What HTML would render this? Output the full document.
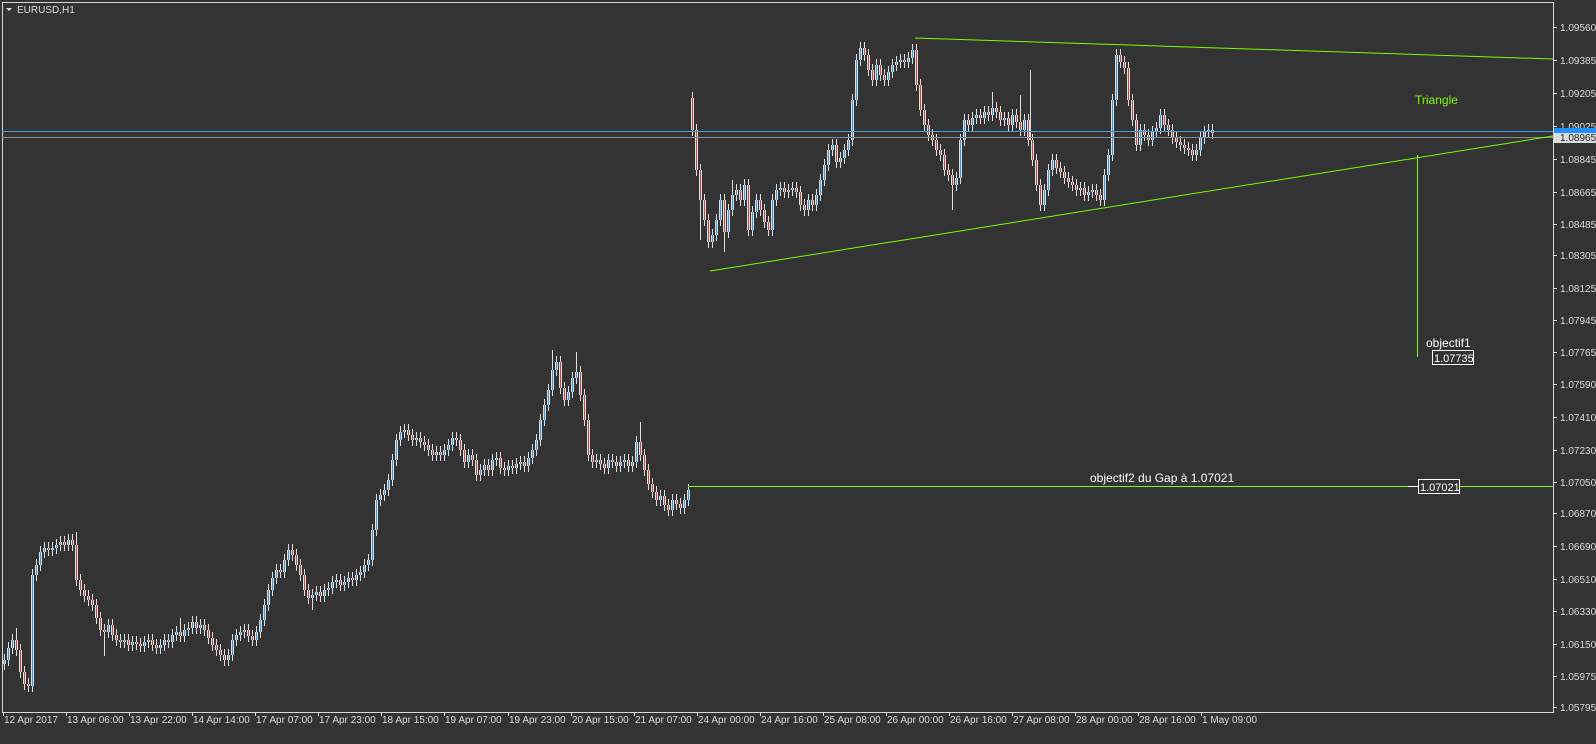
<!DOCTYPE html>
<html><head><meta charset="utf-8"><style>
html,body{margin:0;padding:0;background:#333333;}
body{width:1596px;height:744px;overflow:hidden;position:relative;font-family:"Liberation Sans",sans-serif;}
svg{position:absolute;left:0;top:0}
text{font-family:"Liberation Sans",sans-serif;}
</style></head><body>
<svg width="1596" height="744" xmlns="http://www.w3.org/2000/svg">
<defs>
<marker id="w" markerUnits="userSpaceOnUse" markerWidth="3" markerHeight="14" refX="1.5" refY="7" overflow="visible"><line x1="1.5" y1="1" x2="1.5" y2="13" stroke="#e0e0e0" stroke-width="1"/></marker>
<path id="pb" d="M4.5 660V664M8.5 648V660M12.5 640V648M32.5 575V686M36.5 565V575M40.5 552V565M44.5 548V552M52.5 548V550M56.5 545V548M60.5 542V545M68.5 540V545M108.5 625V632M124.5 640V642M132.5 642V645M144.5 642V646M148.5 640V642M160.5 645V648M164.5 640V645M172.5 635V642M176.5 632V635M184.5 630V636M188.5 628V630M192.5 622V628M200.5 625V628M228.5 655V660M232.5 640V655M236.5 635V640M240.5 632V635M244.5 630V632M256.5 632V640M260.5 620V632M264.5 605V620M268.5 590V605M272.5 578V590M276.5 570V578M284.5 560V572M288.5 550V560M312.5 595V598M316.5 592V595M324.5 590V596M328.5 588V590M332.5 582V588M336.5 580V582M344.5 582V585M348.5 578V582M356.5 575V580M360.5 572V575M364.5 565V572M368.5 560V565M372.5 530V560M376.5 500V530M380.5 495V500M384.5 490V495M388.5 480V490M392.5 460V480M396.5 440V460M400.5 432V440M404.5 430V432M416.5 438V440M436.5 452V455M444.5 450V455M448.5 445V450M452.5 438V445M468.5 455V462M480.5 470V475M484.5 465V470M492.5 460V470M496.5 458V460M508.5 466V470M516.5 464V468M520.5 462V464M528.5 458V466M532.5 450V458M536.5 440V450M540.5 420V440M544.5 405V420M548.5 390V405M552.5 370V390M556.5 362V370M568.5 392V400M572.5 378V392M576.5 372V378M596.5 460V462M608.5 460V468M620.5 462V466M624.5 460V462M632.5 462V466M636.5 442V462M660.5 496V500M672.5 500V510M684.5 500V508M688.5 490V500M712.5 235V242M716.5 220V235M720.5 200V220M728.5 210V232M732.5 195V210M736.5 190V195M744.5 185V200M752.5 212V230M756.5 200V212M772.5 200V230M776.5 190V200M780.5 188V190M788.5 190V192M792.5 188V190M808.5 200V210M816.5 195V205M820.5 180V195M824.5 165V180M828.5 150V165M832.5 145V150M840.5 158V162M844.5 150V158M848.5 140V150M852.5 100V140M856.5 60V100M860.5 48V60M876.5 65V80M888.5 72V80M892.5 65V72M896.5 62V65M900.5 60V62M908.5 58V62M912.5 50V58M956.5 178V185M960.5 140V178M964.5 120V140M972.5 118V125M976.5 115V118M984.5 112V118M992.5 108V115M1004.5 118V120M1012.5 115V125M1024.5 120V130M1044.5 190V205M1048.5 170V190M1052.5 160V170M1080.5 188V190M1088.5 192V195M1092.5 190V192M1104.5 175V200M1108.5 155V175M1112.5 100V155M1116.5 55V100M1140.5 130V145M1152.5 132V140M1156.5 128V132M1160.5 115V128M1196.5 150V155M1200.5 138V150M1204.5 132V138M1208.5 130V132"/>
<path id="pr" d="M16.5 640V650M20.5 650V672M24.5 672V684M28.5 684V686M48.5 548V550M64.5 542V545M72.5 540V545M76.5 545V580M80.5 580V590M84.5 590V596M88.5 596V600M92.5 600V605M96.5 605V618M100.5 618V630M104.5 630V632M112.5 625V635M116.5 635V640M120.5 640V642M128.5 640V645M136.5 642V644M140.5 644V646M152.5 640V645M156.5 645V648M168.5 640V642M180.5 632V636M196.5 622V628M204.5 625V630M208.5 630V638M212.5 638V645M216.5 645V650M220.5 650V655M224.5 655V660M248.5 630V636M252.5 636V640M280.5 570V572M292.5 550V555M296.5 555V565M300.5 565V575M304.5 575V590M308.5 590V598M320.5 592V596M340.5 580V585M352.5 578V580M408.5 430V435M412.5 435V440M420.5 438V442M424.5 442V445M428.5 445V450M432.5 450V455M440.5 452V455M456.5 438V440M460.5 440V450M464.5 450V462M472.5 455V460M476.5 460V475M488.5 465V470M500.5 458V468M504.5 468V470M512.5 466V468M524.5 462V466M560.5 362V388M564.5 388V400M580.5 372V395M584.5 395V420M588.5 420V455M592.5 455V462M600.5 460V464M604.5 464V468M612.5 460V462M616.5 462V466M628.5 460V466M640.5 442V455M644.5 455V470M648.5 470V484M652.5 484V492M656.5 492V500M664.5 496V505M668.5 505V510M676.5 500V504M680.5 504V508M692.5 98V130M696.5 130V170M700.5 170V200M704.5 200V220M708.5 220V242M724.5 200V232M740.5 190V200M748.5 185V230M760.5 200V210M764.5 210V222M768.5 222V230M784.5 188V192M796.5 188V192M800.5 192V205M804.5 205V210M812.5 200V205M836.5 145V162M864.5 48V55M868.5 55V70M872.5 70V80M880.5 65V75M884.5 75V80M904.5 60V62M916.5 50V85M920.5 85V110M924.5 110V125M928.5 125V135M932.5 135V140M936.5 140V150M940.5 150V155M944.5 155V170M948.5 170V175M952.5 175V185M968.5 120V125M980.5 115V118M988.5 112V115M996.5 108V112M1000.5 112V120M1008.5 118V125M1016.5 115V122M1020.5 122V130M1028.5 120V140M1032.5 140V160M1036.5 160V185M1040.5 185V205M1056.5 160V168M1060.5 168V172M1064.5 172V178M1068.5 178V182M1072.5 182V185M1076.5 185V190M1084.5 188V195M1096.5 190V195M1100.5 195V200M1120.5 55V62M1124.5 62V68M1128.5 68V100M1132.5 100V120M1136.5 120V145M1144.5 130V135M1148.5 135V140M1164.5 115V125M1168.5 125V130M1172.5 130V138M1176.5 138V142M1180.5 142V145M1184.5 145V148M1188.5 148V150M1192.5 150V155M1212.5 130V133"/>
</defs>
<rect x="0" y="0" width="1596" height="744" fill="#333333"/>
<g fill="none">
<use href="#pb" stroke="#e0e0e0" stroke-width="1" marker-start="url(#w)" marker-mid="url(#w)" marker-end="url(#w)"/>
<use href="#pr" stroke="#e0e0e0" stroke-width="1" marker-start="url(#w)" marker-mid="url(#w)" marker-end="url(#w)"/>
<path stroke="#e0e0e0" stroke-width="1" d="M1030.5 70V140M952.5 180V210M724.5 230V252M700.5 200V240M640.5 422V450M576.5 352V372M552.5 350V372M104.5 630V656M76.5 532V550M16.5 628V645M312.5 598V610M180.5 618V640M1112.5 100V140M1020.5 95V120M992.5 92V110M732.5 180V200"/>
<use href="#pb" stroke="#e0e0e0" stroke-width="3"/>
<use href="#pr" stroke="#e0e0e0" stroke-width="3"/>
<use href="#pb" stroke="#3a94e0" stroke-width="1"/>
<use href="#pr" stroke="#c04848" stroke-width="1"/>
</g>
<line x1="2.5" y1="2" x2="2.5" y2="712" stroke="#d8d8d8"/>
<line x1="2" y1="2.5" x2="1553" y2="2.5" stroke="#d8d8d8"/>
<line x1="1553.5" y1="2" x2="1553.5" y2="713" stroke="#d8d8d8"/>
<line x1="2" y1="712.5" x2="1554" y2="712.5" stroke="#d8d8d8"/>
<line x1="2" y1="131.5" x2="1553" y2="131.5" stroke="#3aa0e8"/>
<line x1="2" y1="137.5" x2="1553" y2="137.5" stroke="#8a8a8a"/>
<line x1="915" y1="38" x2="1553" y2="59" stroke="#7cfc00"/>
<line x1="710" y1="271" x2="1553" y2="136" stroke="#7cfc00"/>
<line x1="1417.5" y1="155" x2="1417.5" y2="357" stroke="#7cfc00"/>
<line x1="1448" y1="357.5" x2="1454" y2="357.5" stroke="#fff"/>
<rect x="1432.5" y="350.5" width="41" height="14" fill="#333" stroke="#fff"/>
<text x="1434" y="362" font-size="11" fill="#fff">1.07735</text>
<text x="1426" y="347" font-size="12" fill="#fff">objectif1</text>
<text x="1415" y="104" font-size="12" fill="#7cfc00">Triangle</text>
<line x1="688" y1="486.5" x2="1553" y2="486.5" stroke="#7cfc00"/>
<line x1="1408" y1="486.5" x2="1419" y2="486.5" stroke="#fff"/>
<rect x="1418.5" y="479.5" width="41" height="14" fill="#333" stroke="#fff"/>
<text x="1420" y="491" font-size="11" fill="#fff">1.07021</text>
<text x="1090" y="482" font-size="12" fill="#fff">objectif2 du Gap à 1.07021</text>
<polygon points="6,8 12,8 9,11" fill="#ddd"/>
<text x="17" y="13" font-size="10" fill="#ddd">EURUSD,H1</text>
<g font-size="10" fill="#dcdcdc" stroke="none">
<g stroke="#dcdcdc">
<path d="M1554 27.5h3M1554 60.5h3M1554 93.5h3M1554 126.5h3M1554 159.5h3M1554 192.5h3M1554 224.5h3M1554 255.5h3M1554 288.5h3M1554 320.5h3M1554 352.5h3M1554 384.5h3M1554 417.5h3M1554 450.5h3M1554 482.5h3M1554 513.5h3M1554 546.5h3M1554 579.5h3M1554 611.5h3M1554 644.5h3M1554 676.5h3M1554 707.5h3"/>
<path d="M3.5 712v4M66.5 712v4M129.5 712v4M192.5 712v4M255.5 712v4M318.5 712v4M381.5 712v4M444.5 712v4M508.5 712v4M571.5 712v4M634.5 712v4M697.5 712v4M760.5 712v4M823.5 712v4M886.5 712v4M949.5 712v4M1012.5 712v4M1075.5 712v4M1138.5 712v4M1201.5 712v4"/>
</g>
<text x="1560" y="31">1.09560</text><text x="1560" y="64">1.09385</text><text x="1560" y="97">1.09205</text><text x="1560" y="130">1.09025</text><text x="1560" y="163">1.08845</text><text x="1560" y="196">1.08665</text><text x="1560" y="228">1.08485</text><text x="1560" y="259">1.08305</text><text x="1560" y="292">1.08125</text><text x="1560" y="324">1.07945</text><text x="1560" y="356">1.07765</text><text x="1560" y="388">1.07590</text><text x="1560" y="421">1.07410</text><text x="1560" y="454">1.07230</text><text x="1560" y="486">1.07050</text><text x="1560" y="517">1.06870</text><text x="1560" y="550">1.06690</text><text x="1560" y="583">1.06510</text><text x="1560" y="615">1.06330</text><text x="1560" y="648">1.06150</text><text x="1560" y="680">1.05975</text><text x="1560" y="711">1.05795</text>
<text x="4" y="723">12 Apr 2017</text><text x="67" y="723">13 Apr 06:00</text><text x="130" y="723">13 Apr 22:00</text><text x="193" y="723">14 Apr 14:00</text><text x="256" y="723">17 Apr 07:00</text><text x="319" y="723">17 Apr 23:00</text><text x="382" y="723">18 Apr 15:00</text><text x="445" y="723">19 Apr 07:00</text><text x="509" y="723">19 Apr 23:00</text><text x="572" y="723">20 Apr 15:00</text><text x="635" y="723">21 Apr 07:00</text><text x="698" y="723">24 Apr 00:00</text><text x="761" y="723">24 Apr 16:00</text><text x="824" y="723">25 Apr 08:00</text><text x="887" y="723">26 Apr 00:00</text><text x="950" y="723">26 Apr 16:00</text><text x="1013" y="723">27 Apr 08:00</text><text x="1076" y="723">28 Apr 00:00</text><text x="1139" y="723">28 Apr 16:00</text><text x="1202" y="723">1 May 09:00</text>
</g>
<rect x="1554" y="128" width="42" height="6" fill="#1e90ff"/>
<rect x="1554" y="133" width="42" height="10" fill="#dcdcdc"/>
<text x="1560" y="141" font-size="10" fill="#222">1.08965</text>
</svg>
</body></html>
